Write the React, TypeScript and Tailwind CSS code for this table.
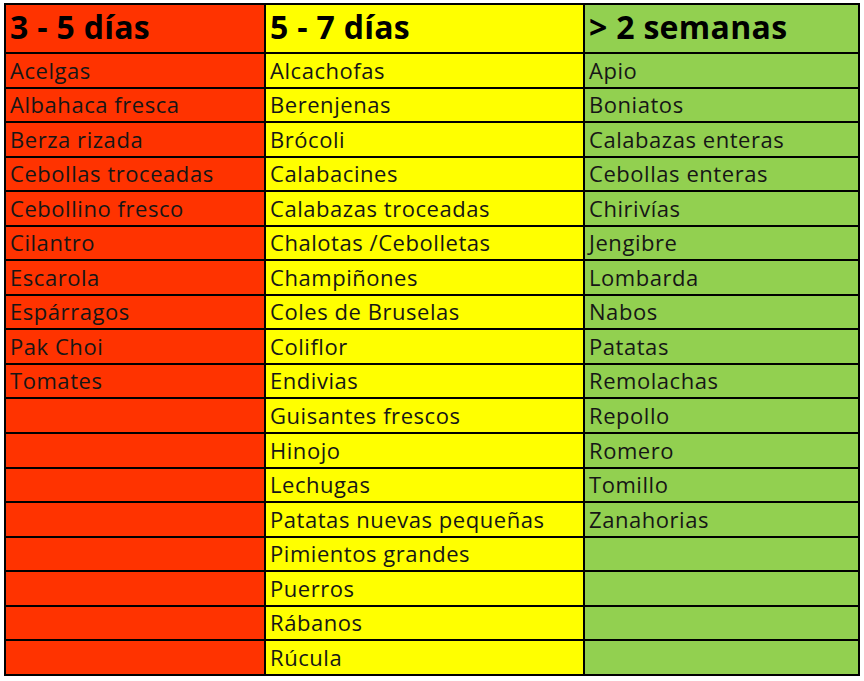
const corto = [
  "Acelgas",
  "Albahaca fresca",
  "Berza rizada",
  "Cebollas troceadas",
  "Cebollino fresco",
  "Cilantro",
  "Escarola",
  "Espárragos",
  "Pak Choi",
  "Tomates",
];

const medio = [
  "Alcachofas",
  "Berenjenas",
  "Brócoli",
  "Calabacines",
  "Calabazas troceadas",
  "Chalotas /Cebolletas",
  "Champiñones",
  "Coles de Bruselas",
  "Coliflor",
  "Endivias",
  "Guisantes frescos",
  "Hinojo",
  "Lechugas",
  "Patatas nuevas pequeñas",
  "Pimientos grandes",
  "Puerros",
  "Rábanos",
  "Rúcula",
];

const largo = [
  "Apio",
  "Boniatos",
  "Calabazas enteras",
  "Cebollas enteras",
  "Chirivías",
  "Jengibre",
  "Lombarda",
  "Nabos",
  "Patatas",
  "Remolachas",
  "Repollo",
  "Romero",
  "Tomillo",
  "Zanahorias",
];

const ROWS = 18;

function Header({ text, bg }: { text: string; bg: string }) {
  return (
    <div className={`${bg} flex items-end pl-[4px] pb-[9px] text-[32px] font-bold leading-none tracking-[0.3px] text-black`}>
      {text}
    </div>
  );
}

function Cell({ text, bg }: { text?: string; bg: string }) {
  return (
    <div className={`${bg} flex items-end pl-[4px] pb-[6px] text-[22px] leading-none tracking-[0.55px] text-[#161616]`}>
      {text}
    </div>
  );
}

export default function App() {
  const rows = Array.from({ length: ROWS }, (_, i) => i);

  return (
    <div className="min-h-screen w-full bg-white pt-[3px] pl-[4px]" style={{ fontFamily: '"Open Sans", "Noto Sans", sans-serif' }}>
      <div className="grid w-[856px] grid-cols-[258px_317px_273px] grid-rows-[47px_repeat(18,32.55px)] gap-[2px] bg-black p-[2px]">
        <Header text="3 - 5 días" bg="bg-[#ff3300]" />
        <Header text="5 - 7 días" bg="bg-[#ffff00]" />
        <Header text="> 2 semanas" bg="bg-[#92d050]" />
        {rows.map((i) => (
          <div key={i} className="contents">
            <Cell text={corto[i]} bg="bg-[#ff3300]" />
            <Cell text={medio[i]} bg="bg-[#ffff00]" />
            <Cell text={largo[i]} bg="bg-[#92d050]" />
          </div>
        ))}
      </div>
    </div>
  );
}
